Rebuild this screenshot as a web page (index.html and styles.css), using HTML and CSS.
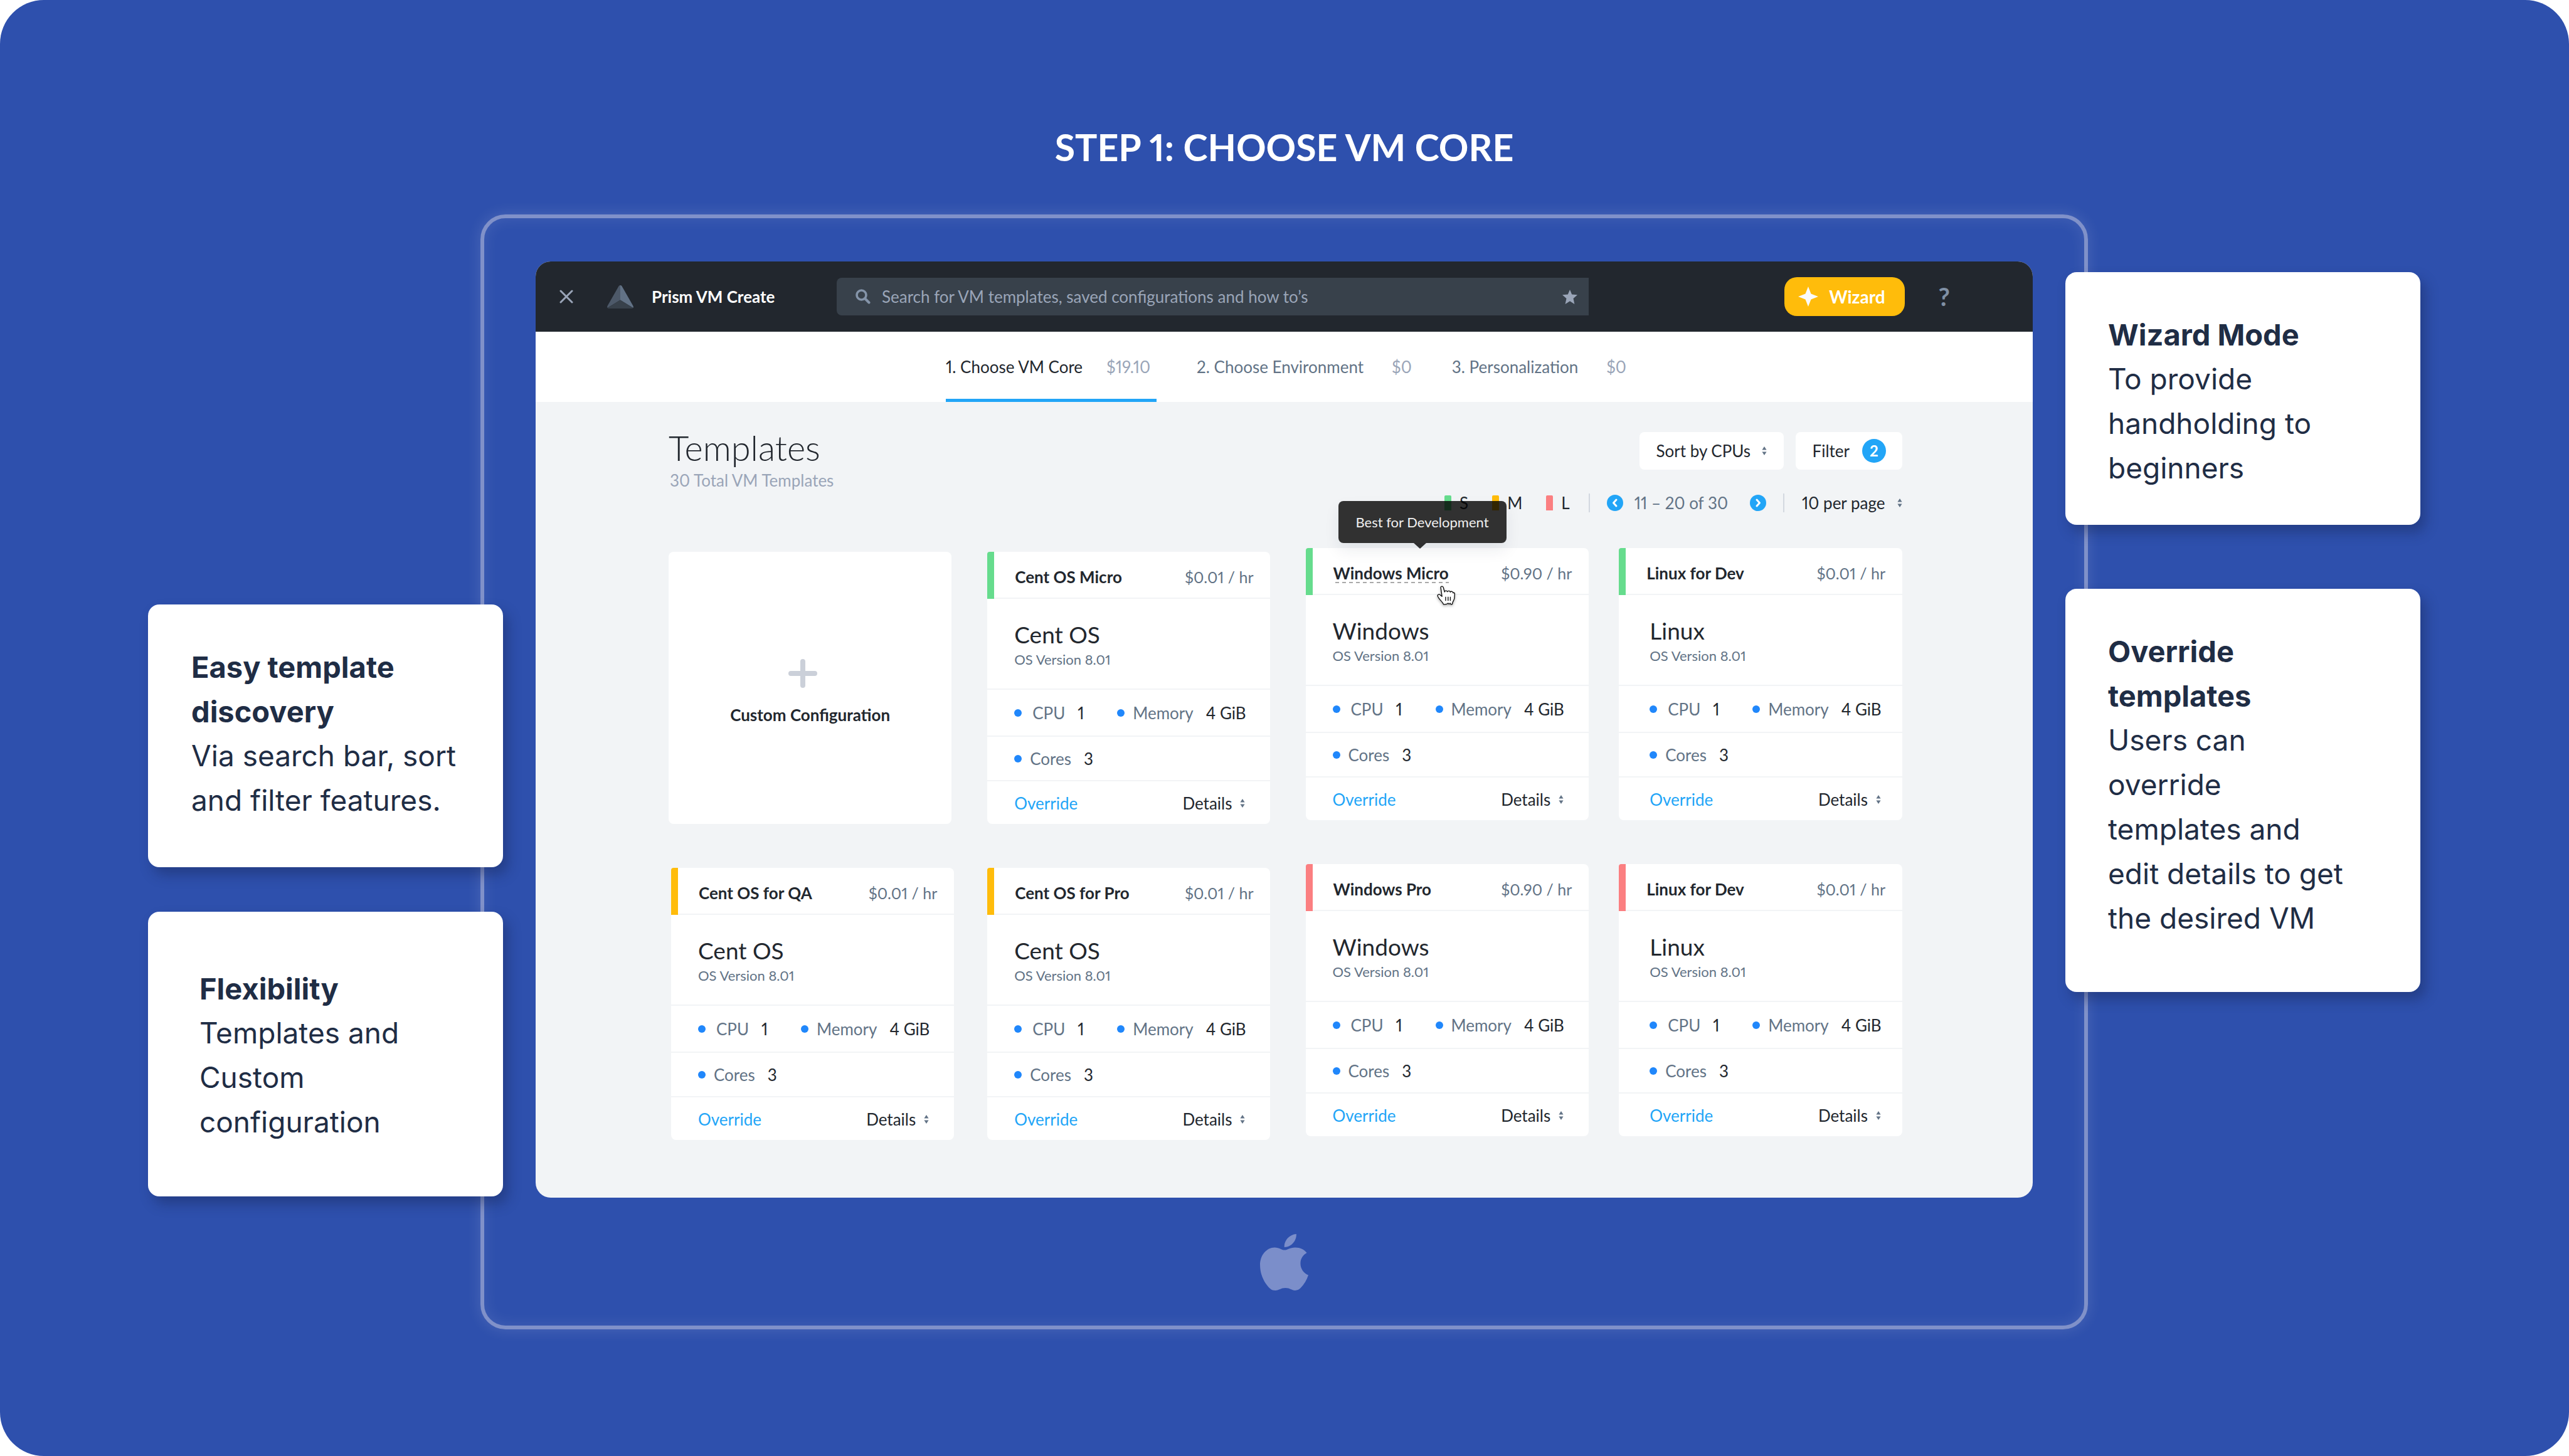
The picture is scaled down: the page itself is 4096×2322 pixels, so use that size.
FILE: index.html
```html
<!DOCTYPE html>
<html lang="en">
<head>
<meta charset="utf-8">
<title>Step 1: Choose VM Core</title>
<meta name="viewport" content="width=device-width, initial-scale=1">
<link rel="stylesheet" href="styles.css">
</head>
<body>
<svg class="sprite" aria-hidden="true">
  <symbol id="sort" viewBox="0 0 8 14"><path d="M4 0 7.6 5.6H.4zM4 14 .4 8.4h7.2z" fill="currentColor"/></symbol>
</svg>
<main class="board">
  <h1 class="board-title">STEP 1: CHOOSE VM CORE</h1>
  <div class="stage">
    <aside class="notes notes-left">
      <section class="note note-discovery">
        <h2>Easy template discovery</h2>
        <p>Via search bar, sort and filter features.</p>
      </section>
      <section class="note note-flexibility">
        <h2>Flexibility</h2>
        <p>Templates and Custom configuration</p>
      </section>
    </aside>

    <div class="device">
      <div class="screen">
        <header class="topbar">
          <div class="brand">
            <button class="icon-button" type="button" aria-label="Close">
              <svg class="icon-close" viewBox="0 0 22 22"><path d="M2 2 20 20M20 2 2 20" fill="none" stroke="currentColor" stroke-width="3" stroke-linecap="round"/></svg>
            </button>
            <svg class="icon-prism" viewBox="0 0 154 136" aria-hidden="true">
              <path d="M77 0C72 0 69 2 67 6L2 120C0 124-1 128 2 132L77 86z" fill="#4d5969"/>
              <path d="M77 0C82 0 85 2 87 6L152 120C154 124 155 128 152 132L77 86z" fill="#627286"/>
              <path d="M77 86 2 132C4 135 6 136 10 136H144C148 136 150 135 152 132z" fill="#38414b"/>
            </svg>
            <span class="brand-name">Prism VM Create</span>
          </div>
          <form class="search" role="search">
            <svg class="icon-search" viewBox="0 0 24 24" aria-hidden="true"><circle cx="9.500" cy="9.500" r="7.500" fill="none" stroke="currentColor" stroke-width="3.600"/><path d="M15 15 21.500 21.500" stroke="currentColor" stroke-width="4" stroke-linecap="round"/></svg>
            <input type="search" aria-label="Search" placeholder="Search for VM templates, saved configurations and how to’s">
            <button class="icon-button" type="button" aria-label="Saved searches">
              <svg class="icon-star" viewBox="0 0 24 23"><path d="M12 0 15.200 7.500 24 8.300 17.500 14 19.400 23 12 18.300 4.600 23 6.500 14 0 8.300 8.800 7.500z" fill="currentColor"/></svg>
            </button>
          </form>
          <div class="actions">
            <button class="wizard" type="button">
              <svg class="icon-spark" viewBox="0 0 32 32" aria-hidden="true"><path d="M16 0 20.500 11.500 32 16 20.500 20.500 16 32 11.500 20.500 0 16 11.500 11.500z" fill="#fafafa"/></svg>
              Wizard
            </button>
            <button class="help" type="button" aria-label="Help">?</button>
          </div>
        </header>

        <nav class="steps" aria-label="Steps">
          <a class="step step-current" href="#core" aria-current="step">1. Choose VM Core <span class="step-cost">$19.10</span></a>
          <a class="step" href="#environment">2. Choose Environment <span class="step-cost">$0</span></a>
          <a class="step" href="#personalization">3. Personalization <span class="step-cost">$0</span></a>
        </nav>

        <div class="content">
          <div class="content-head">
            <div>
              <h2 class="heading">Templates</h2>
              <p class="subheading">30 Total VM Templates</p>
            </div>
            <div class="controls">
              <div class="control-row">
                <label class="picker picker-box">
                  <select class="pick-sort" aria-label="Sort order"><option>Sort by CPUs</option><option>Sort by Memory</option></select>
                  <svg class="icon-sort"><use href="#sort"/></svg>
                </label>
                <button class="filter" type="button">Filter <span class="badge">2</span></button>
              </div>
              <div class="pager-row">
                <ul class="legend">
                  <li class="size-s">S</li>
                  <li class="size-m">M</li>
                  <li class="size-l">L</li>
                </ul>
                <div class="pager">
                  <button class="page-button" type="button" aria-label="Previous page"><svg viewBox="0 0 26 26"><path d="M15 8 10.500 13 15 18" fill="none" stroke="#fff" stroke-width="3" stroke-linecap="round" stroke-linejoin="round"/></svg></button>
                  <span class="range">11 – 20 of 30</span>
                  <button class="page-button" type="button" aria-label="Next page"><svg viewBox="0 0 26 26"><path d="M11 8 15.500 13 11 18" fill="none" stroke="#fff" stroke-width="3" stroke-linecap="round" stroke-linejoin="round"/></svg></button>
                </div>
                <label class="picker">
                  <select class="pick-size" aria-label="Templates per page"><option>10 per page</option><option>20 per page</option></select>
                  <svg class="icon-sort"><use href="#sort"/></svg>
                </label>
              </div>
            </div>
          </div>

          <div class="catalog">
            <div class="pair pair-left">
              <div class="column">
                <button class="custom" type="button">
                  <svg class="icon-plus" viewBox="0 0 46 46" aria-hidden="true"><path d="M23 4V42M4 23H42" stroke="currentColor" stroke-width="8" stroke-linecap="round"/></svg>
                  Custom Configuration
                </button>
                <article class="card size-m">
                  <header class="card-head"><h3>Cent OS for QA</h3><span class="price">$0.01 / hr</span></header>
                  <div class="card-os"><p class="os-name">Cent OS</p><p class="os-version">OS Version 8.01</p></div>
                  <dl class="specs"><div class="spec spec-cpu"><dt>CPU</dt><dd>1</dd></div><div class="spec spec-memory"><dt>Memory</dt><dd>4 GiB</dd></div></dl>
                  <dl class="specs specs-cores"><div class="spec"><dt>Cores</dt><dd>3</dd></div></dl>
                  <footer class="card-foot"><a href="#override">Override</a><button class="details" type="button">Details <svg class="icon-sort"><use href="#sort"/></svg></button></footer>
                </article>
              </div>
              <div class="column">
                <article class="card size-s">
                  <header class="card-head"><h3>Cent OS Micro</h3><span class="price">$0.01 / hr</span></header>
                  <div class="card-os"><p class="os-name">Cent OS</p><p class="os-version">OS Version 8.01</p></div>
                  <dl class="specs"><div class="spec spec-cpu"><dt>CPU</dt><dd>1</dd></div><div class="spec spec-memory"><dt>Memory</dt><dd>4 GiB</dd></div></dl>
                  <dl class="specs specs-cores"><div class="spec"><dt>Cores</dt><dd>3</dd></div></dl>
                  <footer class="card-foot"><a href="#override">Override</a><button class="details" type="button">Details <svg class="icon-sort"><use href="#sort"/></svg></button></footer>
                </article>
                <article class="card size-m">
                  <header class="card-head"><h3>Cent OS for Pro</h3><span class="price">$0.01 / hr</span></header>
                  <div class="card-os"><p class="os-name">Cent OS</p><p class="os-version">OS Version 8.01</p></div>
                  <dl class="specs"><div class="spec spec-cpu"><dt>CPU</dt><dd>1</dd></div><div class="spec spec-memory"><dt>Memory</dt><dd>4 GiB</dd></div></dl>
                  <dl class="specs specs-cores"><div class="spec"><dt>Cores</dt><dd>3</dd></div></dl>
                  <footer class="card-foot"><a href="#override">Override</a><button class="details" type="button">Details <svg class="icon-sort"><use href="#sort"/></svg></button></footer>
                </article>
              </div>
            </div>
            <div class="pair pair-right">
              <div class="column">
                <article class="card size-s">
                  <header class="card-head"><h3 class="hinted" aria-describedby="hint">Windows Micro</h3><span class="price">$0.90 / hr</span></header>
                  <div class="card-os"><p class="os-name">Windows</p><p class="os-version">OS Version 8.01</p></div>
                  <dl class="specs"><div class="spec spec-cpu"><dt>CPU</dt><dd>1</dd></div><div class="spec spec-memory"><dt>Memory</dt><dd>4 GiB</dd></div></dl>
                  <dl class="specs specs-cores"><div class="spec"><dt>Cores</dt><dd>3</dd></div></dl>
                  <footer class="card-foot"><a href="#override">Override</a><button class="details" type="button">Details <svg class="icon-sort"><use href="#sort"/></svg></button></footer>
                  <div class="tooltip" id="hint" role="tooltip">Best for Development</div>
                  <svg class="pointer" viewBox="0 0 104 112" aria-hidden="true"><path d="M22 13C20 3 33 1 36 9L44 36C46 27 57 28 60 35C64 28 75 29 77 37C81 31 92 33 93 42C100 38 103 44 102 52L100 74C99 84 90 90 88 106C83 110 79 108 76 101C71 108 68 108 64 101C58 109 48 108 38 108C32 94 12 78 5 62C1 52 12 46 19 54L29 62z" fill="#fff" stroke="#111" stroke-width="5" stroke-linejoin="round"/><path d="M50 64V88M64 64V88M77 64V88" stroke="#111" stroke-width="5"/></svg>
                </article>
                <article class="card size-l">
                  <header class="card-head"><h3>Windows Pro</h3><span class="price">$0.90 / hr</span></header>
                  <div class="card-os"><p class="os-name">Windows</p><p class="os-version">OS Version 8.01</p></div>
                  <dl class="specs"><div class="spec spec-cpu"><dt>CPU</dt><dd>1</dd></div><div class="spec spec-memory"><dt>Memory</dt><dd>4 GiB</dd></div></dl>
                  <dl class="specs specs-cores"><div class="spec"><dt>Cores</dt><dd>3</dd></div></dl>
                  <footer class="card-foot"><a href="#override">Override</a><button class="details" type="button">Details <svg class="icon-sort"><use href="#sort"/></svg></button></footer>
                </article>
              </div>
              <div class="column column-inset">
                <article class="card size-s">
                  <header class="card-head"><h3>Linux for Dev</h3><span class="price">$0.01 / hr</span></header>
                  <div class="card-os"><p class="os-name">Linux</p><p class="os-version">OS Version 8.01</p></div>
                  <dl class="specs"><div class="spec spec-cpu"><dt>CPU</dt><dd>1</dd></div><div class="spec spec-memory"><dt>Memory</dt><dd>4 GiB</dd></div></dl>
                  <dl class="specs specs-cores"><div class="spec"><dt>Cores</dt><dd>3</dd></div></dl>
                  <footer class="card-foot"><a href="#override">Override</a><button class="details" type="button">Details <svg class="icon-sort"><use href="#sort"/></svg></button></footer>
                </article>
                <article class="card size-l">
                  <header class="card-head"><h3>Linux for Dev</h3><span class="price">$0.01 / hr</span></header>
                  <div class="card-os"><p class="os-name">Linux</p><p class="os-version">OS Version 8.01</p></div>
                  <dl class="specs"><div class="spec spec-cpu"><dt>CPU</dt><dd>1</dd></div><div class="spec spec-memory"><dt>Memory</dt><dd>4 GiB</dd></div></dl>
                  <dl class="specs specs-cores"><div class="spec"><dt>Cores</dt><dd>3</dd></div></dl>
                  <footer class="card-foot"><a href="#override">Override</a><button class="details" type="button">Details <svg class="icon-sort"><use href="#sort"/></svg></button></footer>
                </article>
              </div>
            </div>
          </div>
        </div>
      </div>
      <svg class="device-logo" viewBox="431 138 282 329" aria-hidden="true">
        <path d="M573 215C570 175 605 140 643 138C645 178 612 214 573 215Z"/>
        <path d="M574 231C555 231 545 216 516 216C470 216 431 260 431 318C431 390 470 440 492 458C500 465 508 467 520 467C545 467 550 453 579 453C608 453 613 467 636 467C648 467 658 463 668 453C690 430 704 405 713 378C685 366 667 340 667 310C667 282 681 261 704 248C690 228 665 216 636 216C605 216 592 231 574 231Z"/>
      </svg>
    </div>

    <aside class="notes notes-right">
      <section class="note note-wizard">
        <h2>Wizard Mode</h2>
        <p>To provide handholding to beginners</p>
      </section>
      <section class="note note-override">
        <h2>Override templates</h2>
        <p>Users can override templates and edit details to get the desired VM</p>
      </section>
    </aside>
  </div>
</main>
</body>
</html>
```
FILE: styles.css
```css
:root {
  --blue: #2e50ad;
  --ink: #22272e;
  --slate: #627386;
  --mist: #9aa5b8;
  --link: #22a5f7;
  --paper: #f2f4f6;
}

* { box-sizing: border-box; }

body, h1, h2, h3, p, ul, dl, dd { margin: 0; padding: 0; }

body {
  background: #fff;
  font-family: Lato, "Liberation Sans", sans-serif;
  font-size: 26px;
  font-variant-numeric: proportional-nums;
  line-height: 32px;
  color: var(--ink);
}

button, input, select {
  font: inherit;
  font-variant-numeric: inherit;
  color: inherit;
  border: 0;
  padding: 0;
  margin: 0;
  background: none;
  appearance: none;
}

button { cursor: pointer; }
a { color: inherit; text-decoration: none; }
svg { display: block; flex: none; }
.sprite { position: absolute; width: 0; height: 0; }

.board {
  min-height: 100vh;
  padding: 199px 237px 200px 236px;
  border-radius: 70px;
  background: var(--blue);
}

.board-title {
  margin-bottom: 71px;
  font-size: 59px;
  line-height: 72px;
  font-weight: 700;
  text-align: center;
  color: #fff;
}

.stage {
  display: grid;
  grid-template-columns: 566px minmax(0, 1fr) 566px;
}

/* Call-outs */
.notes {
  position: relative;
  z-index: 1;
  display: flex;
  flex-direction: column;
}
.notes-left { padding-top: 622px; gap: 71px; }
.notes-right { padding-top: 92px; gap: 102px; }

.note {
  border-radius: 18px;
  background: #fff;
  box-shadow: 8px 12px 20px rgba(20, 30, 70, .36);
  font-family: Inter, "Liberation Sans", sans-serif;
  font-size: 46px;
  line-height: 71px;
  color: #1f2d45;
}
.note h2 { font-size: 47px; font-weight: 700; }
.note-discovery { padding: 64px 56px 71px 69px; }
.note-flexibility { padding: 87px 56px 83px 82px; }
.note-wizard { padding: 64px 104px 55px 68px; }
.note-override { padding: 64px 104px 82px 68px; }

/* Device */
.device {
  margin: 0 -36px;
  padding: 69px 82px 56px;
  border: 6px solid #8091c9;
  border-radius: 40px;
  box-shadow: 0 0 24px rgba(255, 255, 255, .14), inset 0 0 24px rgba(255, 255, 255, .1);
}
.device-logo { width: 77px; height: 90px; margin: 58px auto 0; fill: #7b8eca; }

.screen { border-radius: 24px; overflow: hidden; background: var(--paper); }

.topbar {
  display: grid;
  grid-template-columns: 480px minmax(0, 1fr) 708px;
  align-items: center;
  height: 112px;
  background: var(--ink);
}
.brand { display: flex; align-items: center; padding-left: 38px; }
.icon-button { color: var(--mist); }
.icon-close { width: 22px; height: 22px; }
.icon-prism { width: 42px; height: 37px; margin: 0 29px 0 54px; }
.brand-name { font-weight: 700; color: #fff; }

.search {
  display: flex;
  align-items: center;
  height: 60px;
  padding: 0 18px 0 30px;
  border-radius: 8px 0 0 8px;
  background: #38414b;
}
.icon-search { width: 24px; height: 24px; color: #8494a9; }
.icon-star { width: 24px; height: 23px; }
.search input { flex: 1; min-width: 0; margin: 0 18px; }
.search input::placeholder { color: var(--mist); opacity: 1; }

.actions { display: flex; align-items: center; justify-content: flex-end; gap: 54px; padding-right: 132px; }
.wizard {
  display: flex;
  align-items: center;
  gap: 17px;
  height: 62px;
  padding: 0 31px 0 22px;
  border-radius: 20px;
  background: #ffbc0b;
  font-size: 28px;
  font-weight: 700;
  color: #fff;
}
.icon-spark { width: 32px; height: 32px; }
.help { font-size: 40px; line-height: 40px; font-weight: 700; color: #8090a5; }

.steps {
  display: flex;
  gap: 64px;
  height: 112px;
  padding-left: 654px;
  background: #fff;
}
.step {
  display: flex;
  align-items: center;
  gap: 45px;
  border-bottom: 5px solid transparent;
  border-top: 5px solid transparent;
  color: var(--slate);
}
.step-current { gap: 38px; padding-right: 10px; border-bottom-color: var(--link); color: var(--ink); }
.step-cost { color: var(--mist); }

.content { padding: 48px 208px 92px 212px; }
.content-head { display: flex; justify-content: space-between; }
.heading { font-size: 56px; line-height: 50px; font-weight: 300; }
.subheading { margin-top: 11px; padding-left: 2px; color: var(--mist); }

.controls { display: flex; flex-direction: column; align-items: flex-end; gap: 38px; }
.control-row { display: flex; gap: 19px; }
.picker { display: flex; align-items: center; gap: 16px; }
.picker select { height: 32px; }
.picker-box { height: 60px; padding: 0 27px; border-radius: 8px; background: #fff; }
.pick-sort { width: 152px; }
.pick-size { width: 136px; }
.icon-sort { width: 8px; height: 14px; color: var(--slate); }
.filter {
  display: flex;
  align-items: center;
  gap: 20px;
  height: 60px;
  padding: 0 26px 0 27px;
  border-radius: 8px;
  background: #fff;
}
.badge {
  width: 38px;
  height: 38px;
  border-radius: 50%;
  background: var(--link);
  font-size: 24px;
  line-height: 38px;
  font-weight: 700;
  color: #fff;
}

.pager-row { display: flex; align-items: center; height: 30px; }
.legend { display: flex; gap: 38px; padding-right: 30px; list-style: none; }
.legend li { display: flex; align-items: center; gap: 13px; }
.legend li::before { content: ""; width: 11px; height: 24px; border-radius: 2px 2px 0 0; background: var(--tone); }
.pager {
  display: flex;
  align-items: center;
  height: 30px;
  margin-right: 28px;
  padding: 0 27px;
  border: solid #d3d8e0;
  border-width: 0 2px;
  color: var(--slate);
}
.page-button { width: 26px; height: 26px; border-radius: 50%; background: var(--link); }
.range { padding: 0 35px 0 18px; }

/* Template cards */
.size-s { --tone: #66dc8d; }
.size-m { --tone: #ffbc0b; }
.size-l { --tone: #fb7f81; }

.catalog {
  display: grid;
  grid-template-columns: 959fr 951fr;
  gap: 56px;
  margin-top: 57px;
}
.pair { display: grid; }
.pair-left { grid-template-columns: 455fr 451fr; gap: 53px; padding-top: 6px; }
.pair-right { grid-template-columns: 1fr 1fr; gap: 48px; }
.pair-left .column:first-child .card { margin-left: 4px; }
.pair-left .column:first-child .custom { margin-right: 4px; }
.column { display: flex; flex-direction: column; gap: 70px; }

.custom {
  display: flex;
  flex-direction: column;
  align-items: center;
  justify-content: center;
  gap: 27px;
  height: 434px;
  padding-top: 12px;
  border-radius: 8px;
  background: #fff;
  font-weight: 700;
}
.icon-plus { width: 46px; height: 46px; margin-right: 24px; color: #cbd0d9; }

.card {
  --inset: 43px;
  position: relative;
  border-radius: 8px;
  background: #fff;
}
.column-inset .card { --inset: 49px; }

.card-head {
  display: flex;
  align-items: center;
  justify-content: space-between;
  height: 75px;
  padding: 4px 27px 0 33px;
  border-left: 11px solid var(--tone);
  border-radius: 4px 0 0 0;
  box-shadow: inset 0 -2px var(--paper);
}
.card-head h3 { font-size: 26px; font-weight: 700; }
.hinted {
  background: repeating-linear-gradient(90deg, #aaa 0 6px, transparent 6px 11px) 3px 100% / 100% 2px no-repeat;
}
.price { font-size: 25px; color: var(--slate); }

.card-os { height: 145px; padding: 33px var(--inset) 0; border-bottom: 2px solid var(--paper); }
.os-name { font-size: 37px; line-height: 48px; }
.os-version { font-size: 22px; line-height: 32px; color: var(--slate); }

.specs { display: flex; align-items: center; height: 75px; padding: 0 0 0 var(--inset); border-bottom: 2px solid var(--paper); }
.specs-cores { height: 71px; }
.spec { display: flex; align-items: center; }
.spec-cpu { width: 164px; }
.spec::before { content: ""; width: 12px; height: 12px; margin-right: 13px; border-radius: 50%; background: #2087fb; }
.spec-cpu::before { margin-right: 17px; }
.spec dt { margin-right: 20px; color: var(--slate); }

.card-foot { display: flex; align-items: center; justify-content: space-between; height: 68px; padding: 2px 40px 0 var(--inset); }
.column-inset .card-foot { padding-right: 34px; }
.card-foot a { color: var(--link); }
.details { display: flex; align-items: center; gap: 13px; }

.tooltip {
  position: absolute;
  left: 52px;
  top: -75px;
  padding: 18px 28px 17px;
  border-radius: 8px;
  background: rgba(0, 0, 0, .8);
  box-shadow: 0 12px 24px rgba(30, 40, 60, .08);
  font-size: 22px;
  color: #f0f0f0;
}
.tooltip::after {
  content: "";
  position: absolute;
  left: 120px;
  top: 100%;
  border: solid transparent;
  border-width: 9px 10px 0;
  border-top-color: rgba(0, 0, 0, .8);
}
.pointer { position: absolute; left: 209px; top: 60px; width: 29px; height: 31px; filter: drop-shadow(0 2px 2px rgba(0, 0, 0, .3)); }
```
